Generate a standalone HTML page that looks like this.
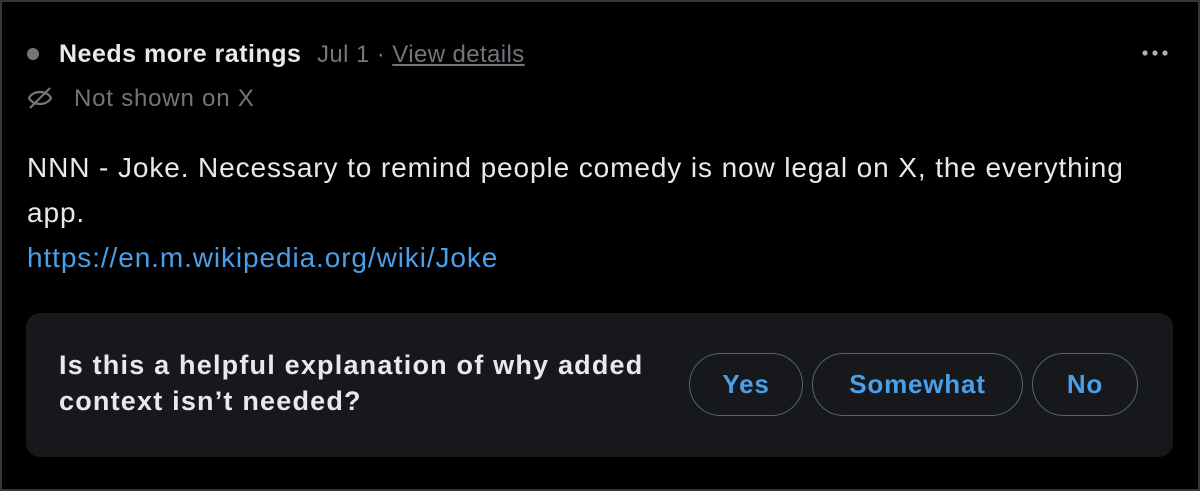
<!DOCTYPE html>
<html><head><style>
html,body{margin:0;padding:0;background:#000;}
body{width:1200px;height:491px;position:relative;overflow:hidden;font-family:"Liberation Sans",Arial,sans-serif;}
.frame{position:absolute;left:0;top:0;width:1196px;height:487px;border:2px solid #33363a;}
.abs{position:absolute;white-space:nowrap;}
.panel{position:absolute;left:26px;top:313px;width:1147px;height:144px;background:#17181c;border-radius:14px;}
.btn{position:absolute;top:353px;border:1.5px solid #536471;border-radius:32px;color:#4a9fe8;font-weight:bold;font-size:26px;letter-spacing:0.8px;display:flex;align-items:center;justify-content:center;box-sizing:border-box;height:63px;}
</style></head><body>
<div class="frame"></div>
<div class="abs" style="left:27px;top:48px;width:12px;height:12px;border-radius:50%;background:#71767b;"></div>
<div class="abs" style="left:59px;top:40px;font-size:25px;font-weight:bold;color:#e7e9ea;letter-spacing:0.5px;">Needs more ratings</div>
<div class="abs" style="left:317px;top:41px;font-size:24px;color:#71767b;letter-spacing:0.4px;">Jul 1 · <span style="text-decoration:underline;">View details</span></div>
<svg class="abs" style="left:1141px;top:47px" width="30" height="12"><circle cx="4" cy="6" r="2.6" fill="#aab0b6"/><circle cx="14" cy="6" r="2.6" fill="#aab0b6"/><circle cx="24" cy="6" r="2.6" fill="#aab0b6"/></svg>
<svg class="abs" style="left:26px;top:84px" width="28" height="28" viewBox="0 0 28 28" fill="none" stroke="#71767b" stroke-width="2.2"><path d="M3 14 C7 6 21 6 25 14 C21 22 7 22 3 14Z"/><path d="M24 4 L4 24"/></svg>
<div class="abs" style="left:74px;top:85px;font-size:24px;color:#71767b;letter-spacing:0.8px;">Not shown on X</div>
<div class="abs" style="left:27px;top:145px;font-size:28px;letter-spacing:0.9px;color:#e7e9ea;line-height:45px;white-space:normal;width:1150px;">NNN - Joke. Necessary to remind people comedy is now legal on X, the everything app.<br><span style="color:#4a9fe8;">https://en.m.wikipedia.org/wiki/Joke</span></div>
<div class="panel"></div>
<div class="abs" style="left:59px;top:347px;font-size:27px;letter-spacing:1.2px;font-weight:bold;color:#e7e9ea;line-height:36px;">Is this a helpful explanation of why added<br>context isn’t needed?</div>
<div class="btn" style="left:689px;width:114px;">Yes</div>
<div class="btn" style="left:812px;width:211px;">Somewhat</div>
<div class="btn" style="left:1032px;width:106px;">No</div>
</body></html>
